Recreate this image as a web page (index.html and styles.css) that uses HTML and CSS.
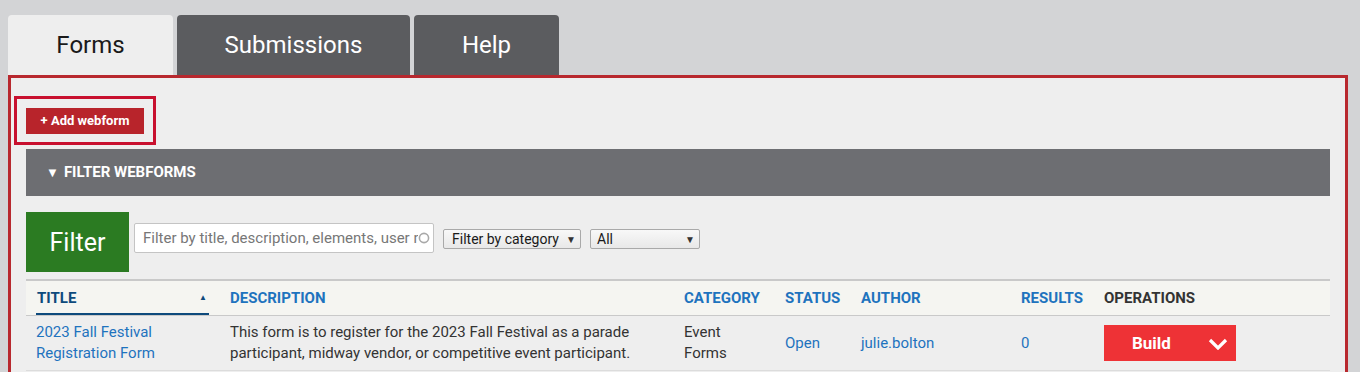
FILE: index.html
```html
<!DOCTYPE html>
<html lang="en">
<head>
<meta charset="utf-8">
<title>Webforms</title>
<link rel="stylesheet" href="styles.css">
</head>
<body>
<div class="page">
  <nav class="tabs">
    <a class="tab tab-active" href="#">Forms</a>
    <a class="tab tab-sub" href="#">Submissions</a>
    <a class="tab tab-help" href="#">Help</a>
  </nav>
  <main class="panel">
    <div class="add-outline">
      <a class="add-btn" href="#">+ Add webform</a>
    </div>
    <div class="filter-bar"><span class="tri">&#9660;</span>FILTER WEBFORMS</div>
    <div class="filter-row">
      <button class="filter-btn">Filter</button>
      <div class="search">
        <span class="placeholder">Filter by title, description, elements, user n</span>
        <svg class="spin" width="12" height="12" viewBox="0 0 12 12"><circle cx="6" cy="6" r="4.6" fill="none" stroke="#a9a9a9" stroke-width="1.6"/></svg>
      </div>
      <div class="select sel-cat"><span>Filter by category</span><span class="arrow">&#9660;</span></div>
      <div class="select sel-all"><span>All</span><span class="arrow">&#9660;</span></div>
    </div>
    <table class="grid">
      <colgroup>
        <col class="c-title"><col class="c-desc"><col class="c-cat"><col class="c-status"><col class="c-author"><col class="c-results"><col class="c-ops">
      </colgroup>
      <thead>
        <tr>
          <th class="th-title"><a class="sorted" href="#"><span>TITLE</span><span class="sort">&#9650;</span></a></th>
          <th><a href="#">DESCRIPTION</a></th>
          <th><a href="#">CATEGORY</a></th>
          <th><a href="#">STATUS</a></th>
          <th><a href="#">AUTHOR</a></th>
          <th><a href="#">RESULTS</a></th>
          <th class="th-ops">OPERATIONS</th>
        </tr>
      </thead>
      <tbody>
        <tr>
          <td><a href="#">2023 Fall Festival Registration Form</a></td>
          <td>This form is to register for the 2023 Fall Festival as a parade participant, midway vendor, or competitive event participant.</td>
          <td>Event<br>Forms</td>
          <td><a href="#">Open</a></td>
          <td><a href="#">julie.bolton</a></td>
          <td><a href="#">0</a></td>
          <td>
            <div class="build">
              <span class="build-label">Build</span>
              <svg class="chev" width="20" height="12" viewBox="0 0 20 12"><path d="M2 2 L10 10 L18 2" fill="none" stroke="#fff" stroke-width="3.2"/></svg>
            </div>
          </td>
        </tr>
      </tbody>
    </table>
  </main>
</div>
</body>
</html>
```

FILE: styles.css
```css
* { box-sizing: border-box; }
html, body { margin: 0; padding: 0; }
body {
  background: #d3d4d6;
  font-family: Roboto, "Liberation Sans", Arial, sans-serif;
  color: #333;
  overflow: hidden;
}
a { text-decoration: none; }
.page {
  padding: 15px 12px 0 8px;
}
.tabs {
  display: flex;
  gap: 4px;
  height: 60px;
}
.tab {
  display: flex;
  align-items: center;
  justify-content: center;
  height: 60px;
  border-radius: 4px 4px 0 0;
  font-size: 24px;
  color: #fff;
  background: #5b5c5f;
  padding-bottom: 1px;
}
.tab-active { width: 165px; background: #eeeeee; color: #1a1a1a; }
.tab-sub { width: 233px; }
.tab-help { width: 145px; }

.panel {
  border: 3px solid #b8282e;
  border-bottom: none;
  background: #eeeeee;
  padding: 18px 15px 0 15px;
  height: 300px;
}
.add-outline {
  display: inline-block;
  margin-left: -12px;
  border: 3px solid #c8102e;
  padding: 9px 9px 8px 9px;
}
.add-btn {
  display: block;
  width: 118px;
  height: 26px;
  line-height: 26px;
  background: #b8242b;
  color: #fff;
  font-size: 13px;
  font-weight: 700;
  text-align: center;
}
.filter-bar {
  margin-top: 4px;
  height: 47px;
  background: #6d6e72;
  color: #fff;
  font-weight: 700;
  font-size: 15px;
  line-height: 47px;
  padding-left: 20px;
  display: flex;
  align-items: center;
}
.tri { font-size: 13px; margin-right: 5px; }
.filter-row {
  display: flex;
  align-items: flex-start;
  margin-top: 16px;
  height: 60px;
}
.filter-btn {
  width: 103px;
  height: 60px;
  border: none;
  background: #2b7b22;
  color: #fff;
  font-family: inherit;
  font-size: 25px;
  padding: 0;
}
.search {
  margin: 11px 0 0 5px;
  width: 300px;
  height: 30px;
  background: #fff;
  border: 1px solid #c4c4c4;
  border-radius: 2px;
  display: flex;
  align-items: center;
  padding-left: 8px;
  position: relative;
  overflow: hidden;
}
.placeholder {
  font-size: 15px;
  color: #777;
  white-space: nowrap;
}
.spin {
  position: absolute;
  right: 3px;
  top: 8px;
  background: #fff;
}
.select {
  margin-top: 17px;
  height: 20px;
  border: 1px solid #a9a9a9;
  border-radius: 2px;
  background: linear-gradient(#f8f8f8, #e8e8e8);
  display: flex;
  align-items: center;
  justify-content: space-between;
  font-size: 14px;
  color: #1a1a1a;
  padding: 0 4px 0 8px;
}
.sel-cat { margin-left: 9px; width: 138px; }
.sel-all { margin-left: 9px; width: 110px; padding-left: 6px; }
.arrow { font-size: 10px; color: #333; }

.grid {
  margin-top: 7px;
  width: 1304px;
  border-collapse: collapse;
  table-layout: fixed;
}
.c-title { width: 194px; }
.c-desc { width: 454px; }
.c-cat { width: 101px; }
.c-status { width: 76px; }
.c-author { width: 160px; }
.c-results { width: 83px; }
.c-ops { width: 236px; }
.grid thead tr {
  background: #f5f5f1;
  border-top: 2px solid #c9c9c9;
  border-bottom: 1px solid #c9c9c9;
}
.grid th {
  text-align: left;
  font-size: 15px;
  font-weight: 700;
  height: 35px;
  padding: 0 10px 1px;
}
.grid th a { color: #1e73be; }
.th-ops { color: #333; }
.th-title { padding: 0 11px 0 10px !important; vertical-align: bottom; }
.th-title .sorted {
  display: flex;
  justify-content: space-between;
  align-items: center;
  color: #0e4a7c;
  border-bottom: 3px solid #0e4a7c;
  height: 35px;
  padding: 1px 0 0 1px;
  margin-bottom: -1px;
}
.sort { font-size: 8px; padding-right: 2px; }
.grid td {
  font-size: 15px;
  line-height: 21px;
  padding: 6px 10px;
  vertical-align: middle;
  border-bottom: 1px solid #dcdcdc;
  color: #333;
}
.grid td a { color: #1e73be; }
.build {
  width: 132px;
  height: 36px;
  background: #ee3236;
  display: flex;
  align-items: center;
  color: #fff;
  font-weight: 700;
  font-size: 17px;
  padding-left: 28px;
}
.build-label { width: 76px; }
.chev { margin-top: 1px; }
```
